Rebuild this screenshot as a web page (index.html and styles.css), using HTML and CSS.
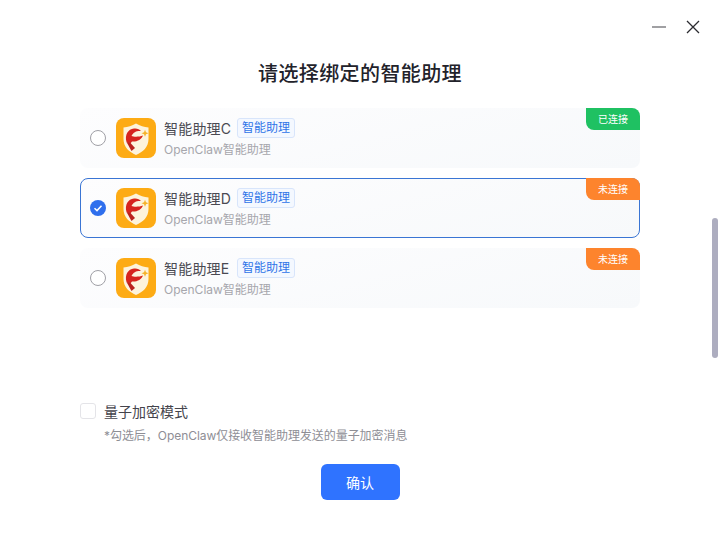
FILE: index.html
```html
<!DOCTYPE html>
<html lang="zh-CN">
<head>
    <meta charset="UTF-8">
    <title>请选择绑定的智能助理</title>
    <link rel="stylesheet" href="styles.css">
</head>
<body>
    <svg class="defs" width="0" height="0">
        <symbol id="logo" viewBox="0 0 40 40">
            <rect width="40" height="40" rx="8" fill="#fdab14"/>
            <path d="M20 5.500C24 8 28 9 32.500 9.500V21C32.500 29 27 34 20 37C13 34 7.500 29 7.500 21V9.500C12 9 16 8 20 5.500Z" fill="#fdf3dc"/>
            <path d="M10.500 24C8.500 17 12 11 18 10.500C21 10.200 23.500 11 25 13C21.500 12.500 17.500 13.500 15.500 18C18 19 23 19 27 17.500C25.500 21.500 21 24 16 23.500L14 26Z" fill="#d6251f"/>
            <path d="M10.500 24L14.500 25L19 30L15.500 33Z" fill="#bb201d"/>
            <path d="M29 11.800L30 14.300L32.500 15.300L30 16.300L29 18.800L28 16.300L25.500 15.300L28 14.300Z" fill="#f5b32b"/>
        </symbol>
    </svg>

    <div class="window-btns">
        <svg width="14" height="14" viewBox="0 0 14 14"><path d="M0 7H14" stroke="#77777c" stroke-width="1.400"/></svg>
        <svg width="14" height="14" viewBox="0 0 14 14"><path d="M1 1L13 13M13 1L1 13" stroke="#2b2b30" stroke-width="1.300"/></svg>
    </div>

    <h1 class="title">请选择绑定的智能助理</h1>

    <div class="list">
        <div class="card">
            <span class="radio"></span>
            <svg class="logo"><use href="#logo"/></svg>
            <div class="info">
                <div class="name"><span class="label">智能助理C</span><span class="tag">智能助理</span></div>
                <div class="desc">OpenClaw智能助理</div>
            </div>
            <span class="status on">已连接</span>
        </div>
        <div class="card selected">
            <span class="radio checked">
                <svg width="16" height="16" viewBox="0 0 16 16"><path d="M4.500 8.200L7 10.600L11.500 5.800" fill="none" stroke="#fff" stroke-width="1.500"/></svg>
            </span>
            <svg class="logo"><use href="#logo"/></svg>
            <div class="info">
                <div class="name"><span class="label">智能助理D</span><span class="tag">智能助理</span></div>
                <div class="desc">OpenClaw智能助理</div>
            </div>
            <span class="status off">未连接</span>
        </div>
        <div class="card">
            <span class="radio"></span>
            <svg class="logo"><use href="#logo"/></svg>
            <div class="info">
                <div class="name"><span class="label">智能助理E</span><span class="tag">智能助理</span></div>
                <div class="desc">OpenClaw智能助理</div>
            </div>
            <span class="status off">未连接</span>
        </div>
    </div>

    <div class="quantum">
        <label class="check-row"><span class="checkbox"></span>量子加密模式</label>
        <p class="hint">*勾选后，OpenClaw仅接收智能助理发送的量子加密消息</p>
    </div>

    <div class="actions">
        <button class="confirm">确认</button>
    </div>

    <div class="scrollbar"></div>
</body>
</html>
```

FILE: styles.css
```css
html, body {
    height: 100%;
}
body {
    font-family: "Inter", "Noto Sans CJK SC", sans-serif;
    margin: 0;
    background: #fff;
    color: #33333a;
    overflow: hidden;
}
.defs {
    position: absolute;
}
.window-btns {
    display: flex;
    justify-content: flex-end;
    gap: 20px;
    padding: 20px 20px 0 0;
    height: 14px;
}
.title {
    margin: 20px 0 0;
    height: 40px;
    line-height: 40px;
    font-size: 20px;
    font-weight: 500;
    letter-spacing: 0.4px;
    text-align: center;
    color: #22222a;
}
.list {
    display: flex;
    flex-direction: column;
    gap: 10px;
    margin: 14px 80px 0;
}
.card {
    position: relative;
    display: flex;
    align-items: center;
    box-sizing: border-box;
    height: 60px;
    padding-left: 9px;
    border: 1px solid transparent;
    border-radius: 8px;
    background: linear-gradient(165deg, #fdfdfe, #f7f9fb) border-box;
}
.card.selected {
    border-color: #3a75d4;
}
.radio {
    box-sizing: border-box;
    width: 16px;
    height: 16px;
    border: 1px solid #a0a0a6;
    border-radius: 50%;
    background: #fff;
}
.radio.checked {
    border: none;
    background: #2f6fed;
}
.radio svg {
    display: block;
}
.logo {
    width: 40px;
    height: 40px;
    margin-left: 10px;
}
.info {
    margin-left: 8px;
}
.name {
    display: flex;
    align-items: center;
    height: 20px;
    font-size: 14px;
    color: #4a4a52;
}
.label {
    width: 73px;
    letter-spacing: 0.2px;
}
.tag {
    box-sizing: border-box;
    height: 20px;
    line-height: 18px;
    padding: 0 4px;
    font-size: 12px;
    color: #2f74e8;
    background: #f4f8ff;
    border: 1px solid #d8e5fb;
    border-radius: 3px;
}
.desc {
    margin-top: 3px;
    font-size: 12px;
    line-height: 18px;
    color: #a6a6ac;
}
.status {
    position: absolute;
    top: -1px;
    right: -1px;
    width: 54px;
    height: 22px;
    line-height: 22px;
    font-size: 10px;
    text-align: center;
    color: #fff;
    border-radius: 0 8px 0 8px;
}
.status.on {
    background: #1fc162;
}
.status.off {
    background: #fd842d;
}
.quantum {
    margin: 93px 80px 0;
}
.check-row {
    display: flex;
    align-items: center;
    gap: 8px;
    height: 20px;
    font-size: 14px;
    color: #44444c;
}
.checkbox {
    box-sizing: border-box;
    width: 16px;
    height: 16px;
    border: 1px solid #e4e4e8;
    border-radius: 3px;
    background: #fff;
}
.hint {
    margin: 6px 0 0 24px;
    font-size: 12px;
    line-height: 18px;
    letter-spacing: -0.05px;
    color: #8e8e95;
}
.actions {
    display: flex;
    justify-content: center;
    margin-top: 19px;
}
.confirm {
    width: 79px;
    height: 36px;
    padding: 0;
    border: none;
    border-radius: 6px;
    font-family: inherit;
    font-size: 14px;
    color: #fff;
    background: #2f73ff;
}
.scrollbar {
    position: absolute;
    top: 218px;
    left: 712px;
    width: 6px;
    height: 140px;
    border-radius: 3px;
    background: #adadbf;
}
```
